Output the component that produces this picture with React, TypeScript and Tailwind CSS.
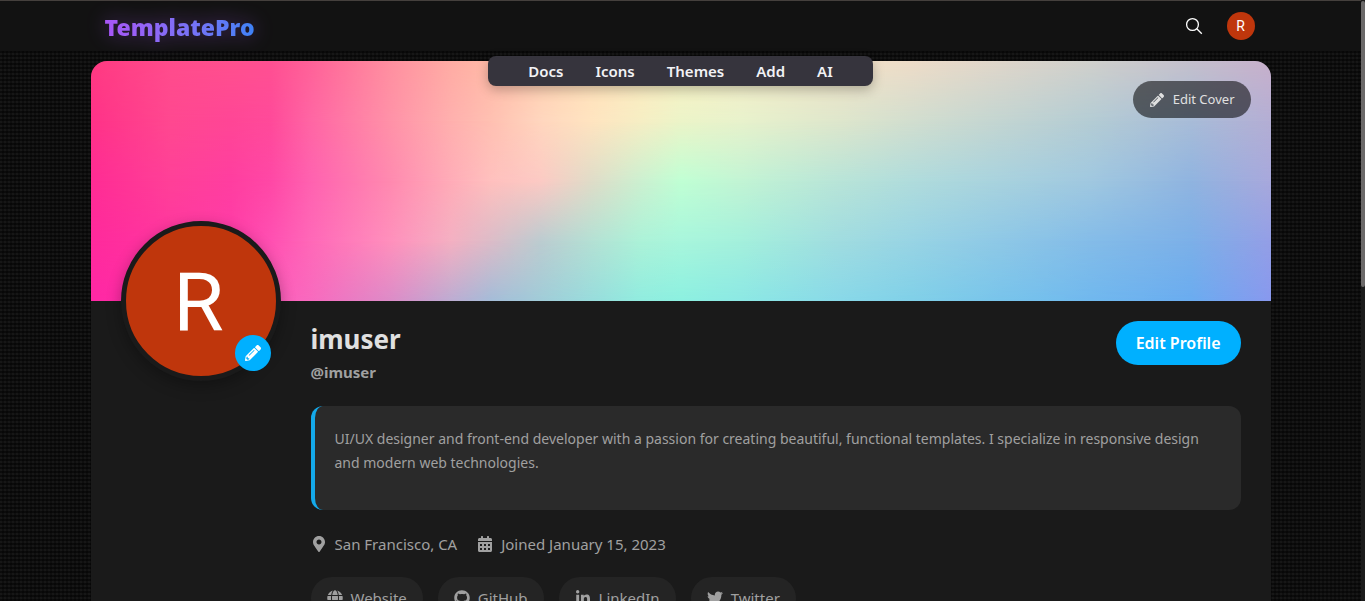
import React from "react";
import {
  FaCalendarAlt,
  FaGithub,
  FaGlobe,
  FaLinkedinIn,
  FaMapMarkerAlt,
  FaPencilAlt,
  FaTwitter,
} from "react-icons/fa";

const COLUMNS = [0, 80, 140, 180, 220, 300, 360, 400, 450, 500, 550, 590, 650, 750, 820, 1000, 1100, 1180];

const COVER_ROWS = [
  "ff3a82 ff4c8c ff508e ff5092 ff6298 ff90a0 ffaca4 ffbaa6 ffcfae ffe0b8 fdeabf fbf0c4 f8ecc8 f2e2c8 eedcc8 d0d0cc c4c0cc c8b0cc",
  "ff3288 ff4890 ff4696 ff4a9a ff66a4 ff92a8 ffb0ae ffc0b2 ffd6be ffe4c0 f6eec4 ecf4c8 e8f2cc dee6cc d2decf b4ccd4 a8bcd8 b4aed4",
  "ff2c94 ff4098 ff3ea0 ff48a6 ff62b0 ff8ab0 ffacb8 ffc0be fccac4 e0dcc8 ccf0d0 c0ffd4 c2f4d4 b8e4d8 b0dcdc a0c8e0 90b4e0 a8a8dc",
  "ff2a9c ff36a0 ff3ca8 ff50b2 ff68b8 ff90bc f4b0c2 dcbcc8 bcccd0 b4e0d4 acf2d8 a8f6dc a4f0dc a0dce0 98d4e4 84bce8 7cb0e8 949ee6",
  "ff28a4 ff30a8 ff48b0 ff5cba f86abe dc8cc8 bcacd2 a4bcd8 a0ccd8 98dcdc 90ecdf 8cf0e0 8ce8e4 88d8e8 80d0e8 70b8ee 6aacf0 8898ee",
].map((row) => row.split(" "));

function CoverArt() {
  return (
    <svg viewBox="0 0 1180 240" preserveAspectRatio="none" className="block h-60 w-full" aria-hidden="true">
      <defs>
        {COVER_ROWS.map((row, i) => (
          <linearGradient key={i} id={`cover-row-${i}`}>
            {row.map((color, c) => (
              <stop key={c} offset={COLUMNS[c] / 1180} stopColor={`#${color}`} />
            ))}
          </linearGradient>
        ))}
        {[1, 2, 3, 4].map((i) => (
          <React.Fragment key={i}>
            <linearGradient
              id={`cover-fade-${i}`}
              gradientUnits="userSpaceOnUse"
              x1="0"
              x2="0"
              y1={(i - 1) * 60}
              y2={i * 60}
            >
              <stop offset="0" stopColor="#fff" stopOpacity="0" />
              <stop offset="1" stopColor="#fff" />
            </linearGradient>
            <mask id={`cover-mask-${i}`} maskUnits="userSpaceOnUse" x="0" y="0" width="1180" height="240" style={{ maskType: "alpha" }}>
              <rect width="1180" height="240" fill={`url(#cover-fade-${i})`} />
            </mask>
          </React.Fragment>
        ))}
      </defs>
      {COVER_ROWS.map((_, i) => (
        <rect
          key={i}
          width="1180"
          height="240"
          fill={`url(#cover-row-${i})`}
          mask={i > 0 ? `url(#cover-mask-${i})` : undefined}
        />
      ))}
    </svg>
  );
}

const NAV = ["Docs", "Icons", "Themes", "Add", "AI"];

const LINKS = [
  { label: "Website", icon: FaGlobe },
  { label: "GitHub", icon: FaGithub },
  { label: "LinkedIn", icon: FaLinkedinIn },
  { label: "Twitter", icon: FaTwitter },
];

function Header() {
  return (
    <header className="border-t border-[#45403d] bg-[#121212]">
      <div className="mx-auto flex h-[50px] max-w-[1180px] items-center justify-between px-3.5">
        <a
          href="#"
          className="bg-linear-to-r from-[#a855f7] to-[#3b82f6] bg-clip-text pt-0.5 text-[23px] leading-8 font-black text-transparent drop-shadow-[0_0_10px_rgba(168,85,247,0.4)]"
        >
          TemplatePro
        </a>
        <div className="flex items-center gap-6 pr-0.5">
          <button type="button" aria-label="Search" className="block text-white">
            <svg viewBox="0 0 18 18" className="block size-[18px]" fill="none" stroke="currentColor" strokeWidth="1.3">
              <circle cx="7.5" cy="7.5" r="5.9" />
              <path d="M11.8 11.8 16.8 16.8" />
            </svg>
          </button>
          <button
            type="button"
            aria-label="Account"
            className="flex size-7 items-center justify-center rounded-full bg-[#bf360c] font-[Roboto,sans-serif] text-sm text-white"
          >
            R
          </button>
        </div>
      </div>
    </header>
  );
}

export default function App() {
  return (
    <div className="relative h-screen overflow-hidden bg-[#0f0f0f] bg-[repeating-linear-gradient(0deg,rgba(0,0,0,0.5)_0px,rgba(0,0,0,0.5)_2px,transparent_2px,transparent_4px),repeating-linear-gradient(90deg,rgba(255,255,255,0.03)_0px,rgba(255,255,255,0.03)_2px,transparent_2px,transparent_4px)] pr-1 font-['Noto_Sans',sans-serif]">
      <div className="absolute top-0 right-0 h-full w-1 bg-[#1b1b1b]">
        <div className="mt-px h-[286px] rounded-sm bg-[#6b6969]" />
      </div>
      <Header />
      <nav className="pointer-events-none absolute top-14 left-0 z-10 flex w-full justify-center pr-1">
        <ul className="pointer-events-auto flex h-[30px] items-center gap-8 rounded-lg bg-[#36343d] px-10 text-[15px] font-semibold text-[#f2f2f5] shadow-[0_4px_12px_rgba(0,0,0,0.25)]">
          {NAV.map((item) => (
            <li key={item}>
              <a href="#">{item}</a>
            </li>
          ))}
        </ul>
      </nav>
      <main className="relative mx-auto mt-2.5 max-w-[1180px] rounded-t-2xl bg-[#1a1a1a]">
        <div className="overflow-hidden rounded-t-2xl">
          <CoverArt />
        </div>
        <button
          type="button"
          className="absolute top-5 right-5 flex h-[37px] items-center gap-2 rounded-full bg-black/55 px-4 text-[13px] text-[#e0e0e0]"
        >
          <FaPencilAlt className="size-4 p-px" />
          Edit Cover
        </button>
        <div className="flex gap-[30px] px-[30px]">
          <div className="relative -mt-20 size-40 shrink-0 rounded-full border-5 border-[#1a1a1a] bg-[#bf360c] shadow-[0_5px_15px_rgba(0,0,0,0.3)]">
            <span className="flex size-full items-center justify-center pt-1 pr-1 font-[Roboto,sans-serif] text-[82px] leading-none text-white">
              R
            </span>
            <button
              type="button"
              aria-label="Change avatar"
              className="absolute right-[5px] bottom-[5px] flex size-9 items-center justify-center rounded-full bg-[#00b0ff] text-white"
            >
              <FaPencilAlt className="size-4" />
            </button>
          </div>
          <section className="min-w-0 flex-1 pt-5">
            <div className="flex items-start justify-between">
              <div>
                <h1 className="text-[26px] leading-9 font-bold text-[#e0e0e0]">imuser</h1>
                <p className="mt-[3px] text-[15px] leading-6 font-bold text-[#a0a0a0]">@imuser</p>
              </div>
              <button type="button" className="h-11 rounded-full bg-[#00b0ff] px-5 text-base font-semibold text-white">
                Edit Profile
              </button>
            </div>
            <p className="mt-[22px] h-[104px] rounded-xl border-l-4 border-[#14a9ea] bg-[#2a2a2a] pt-[21px] pr-5 pl-5 text-[14px] leading-6 text-[#a0a0a0]">
              UI/UX designer and front-end developer with a passion for creating beautiful, functional templates. I specialize
              in responsive design and modern web technologies.
            </p>
            <div className="mt-[22px] flex gap-5 text-[15px] leading-6 text-[#a0a0a0]">
              <span className="flex items-center gap-2">
                <FaMapMarkerAlt className="size-4" />
                San Francisco, CA
              </span>
              <span className="flex items-center gap-2">
                <FaCalendarAlt className="size-4" />
                Joined January 15, 2023
              </span>
            </div>
            <div className="mt-[21px] flex gap-[15px] text-[15px] text-[#a0a0a0]">
              {LINKS.map(({ label, icon: Icon }) => (
                <a key={label} href="#" className="flex h-[42px] items-center gap-2 rounded-full bg-[#242424] px-4">
                  <Icon className="size-4" />
                  {label}
                </a>
              ))}
            </div>
          </section>
        </div>
      </main>
    </div>
  );
}
